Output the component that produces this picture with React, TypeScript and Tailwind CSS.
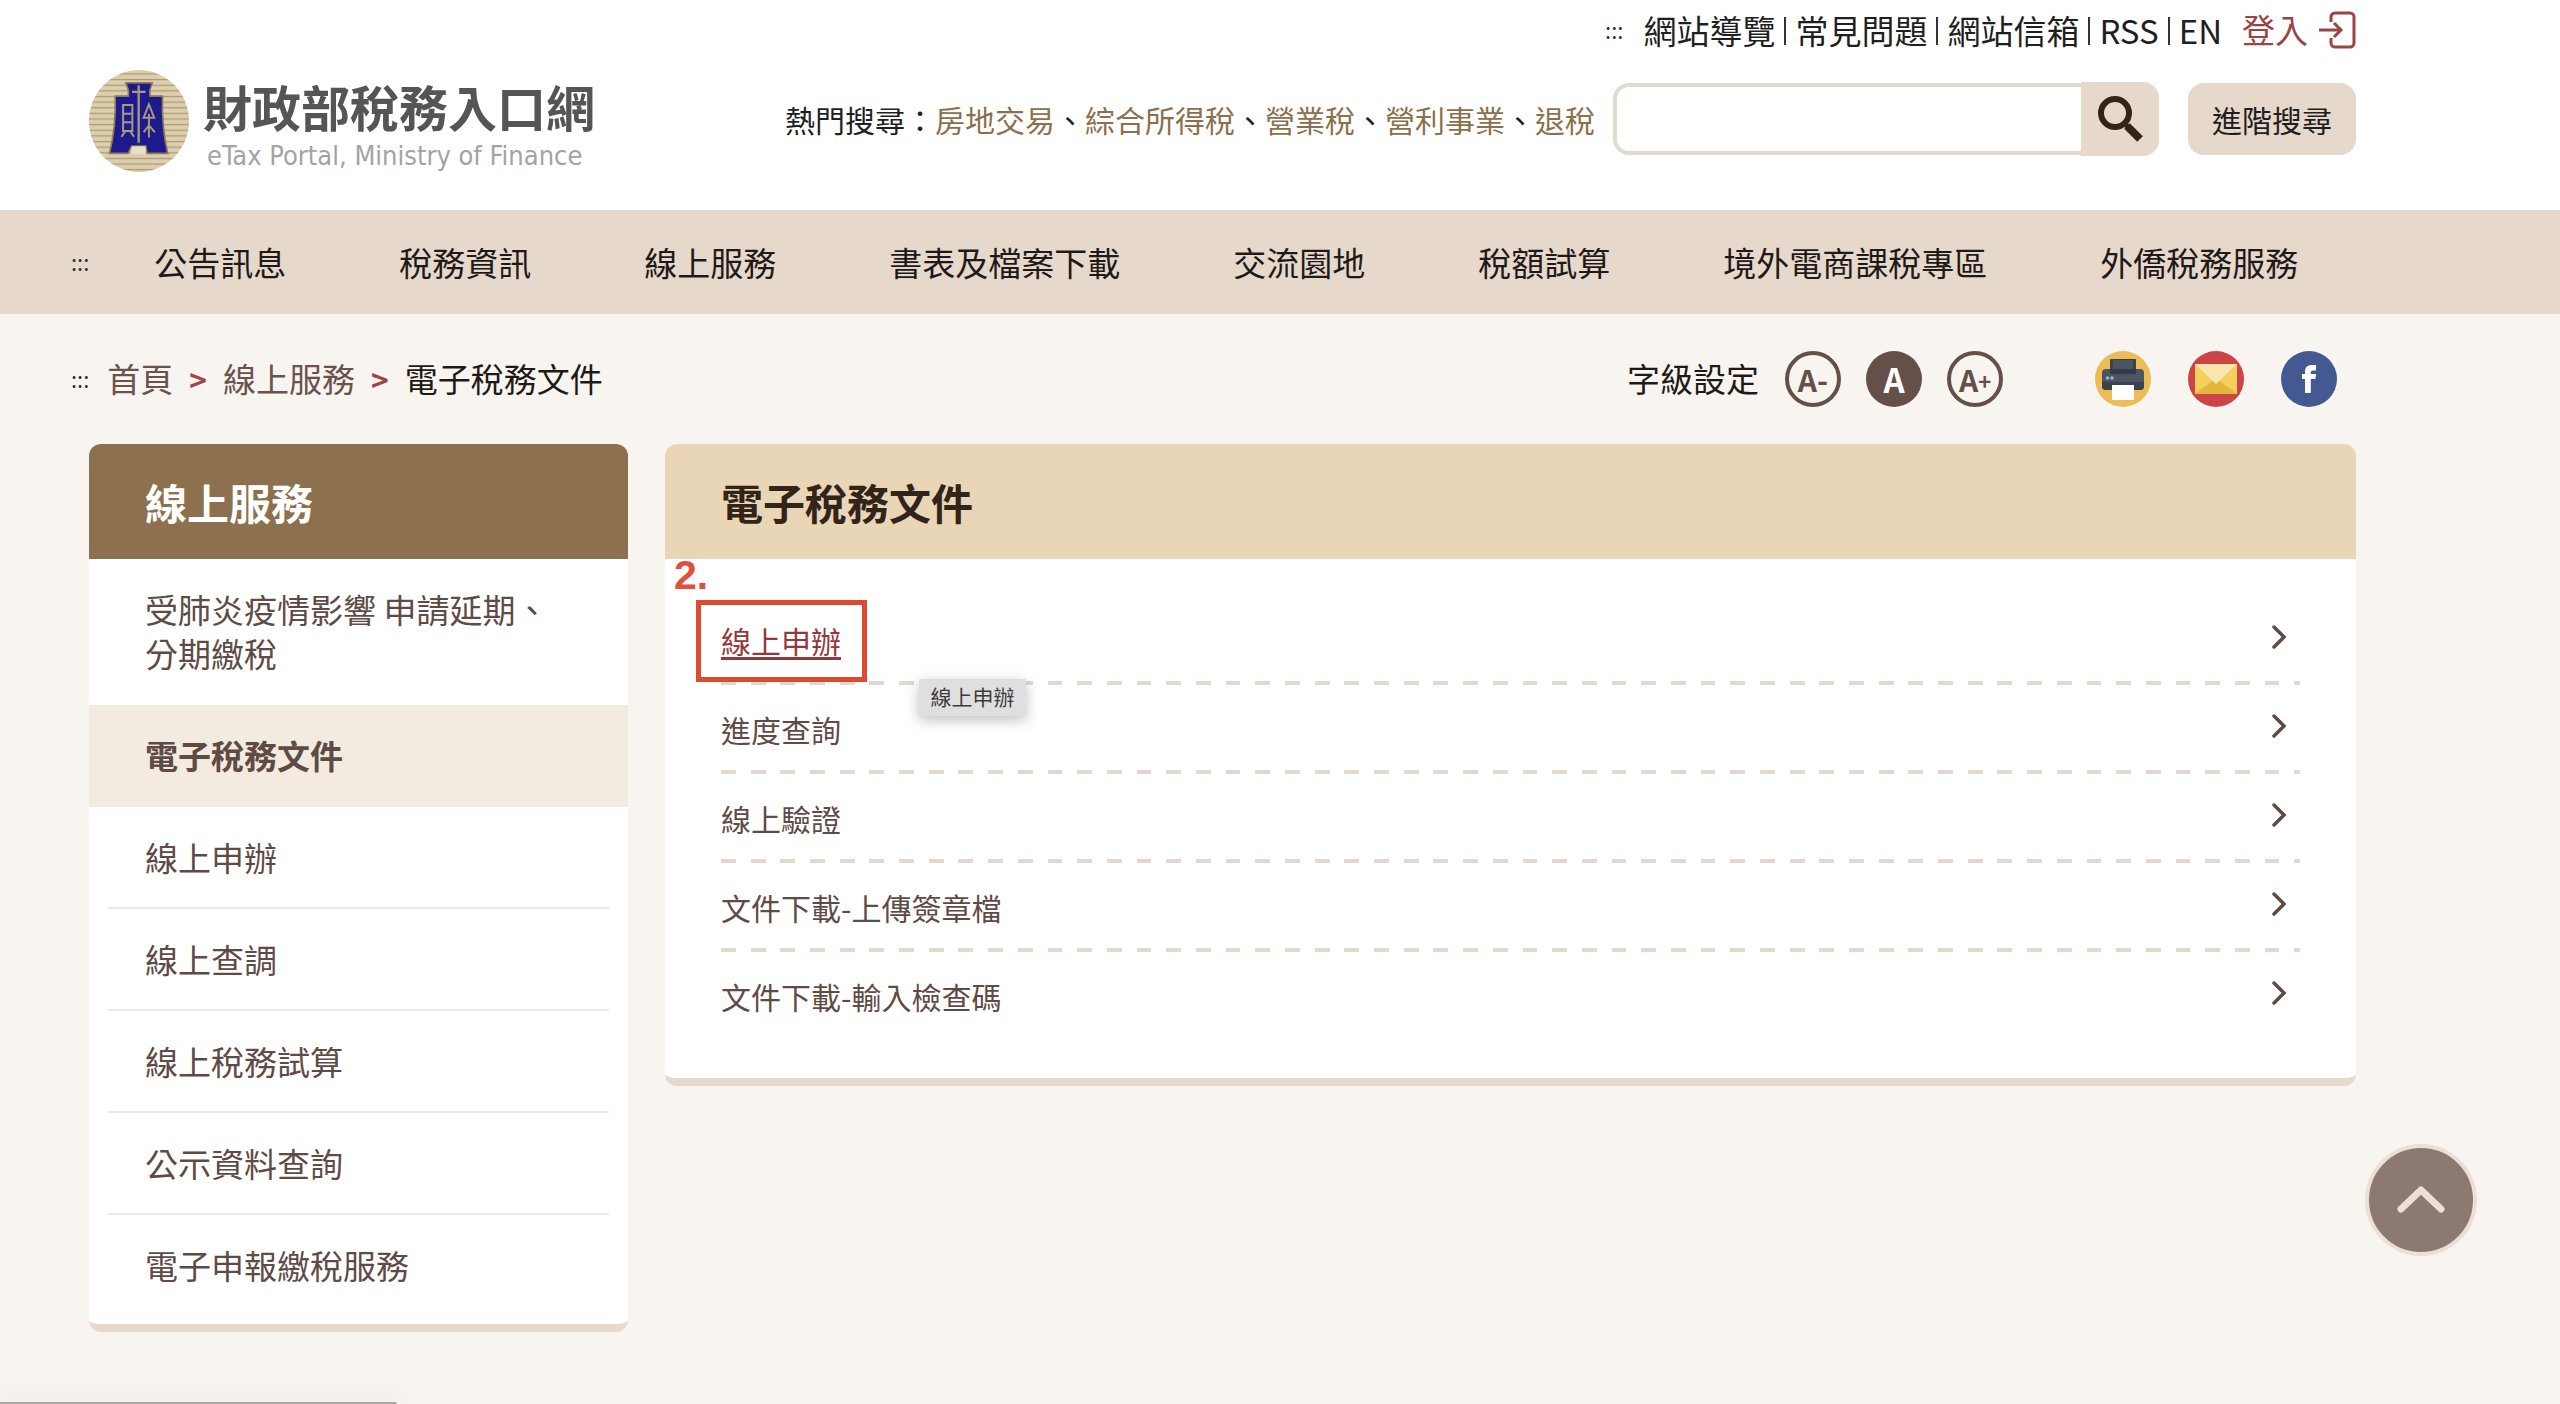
import { Fragment } from "react";
import clsx from "clsx";

const topLinks = ["網站導覽", "常見問題", "網站信箱", "RSS", "EN"];

const hotKeywords = ["房地交易", "綜合所得稅", "營業稅", "營利事業", "退稅"];

const mainMenu = [
  "公告訊息",
  "稅務資訊",
  "線上服務",
  "書表及檔案下載",
  "交流園地",
  "稅額試算",
  "境外電商課稅專區",
  "外僑稅務服務",
];

const sideMenu = [
  { label: "受肺炎疫情影響 申請延期、分期繳稅" },
  { label: "電子稅務文件", active: true },
  { label: "線上申辦" },
  { label: "線上查調" },
  { label: "線上稅務試算" },
  { label: "公示資料查詢" },
  { label: "電子申報繳稅服務" },
];

const documentLinks = [
  "線上申辦",
  "進度查詢",
  "線上驗證",
  "文件下載-上傳簽章檔",
  "文件下載-輸入檢查碼",
];

/* Access key marker */
function Marker() {
  return (
    <a href="#" className="pb-[2px] text-[22px] leading-none text-[#333]">
      :::
    </a>
  );
}

function LogoMark() {
  return (
    <svg viewBox="14 18 302 308" className="w-[100px] h-[102px] shrink-0">
      <defs>
        <pattern id="stripes" width="20" height="17" patternUnits="userSpaceOnUse">
          <rect width="20" height="17" fill="#dccfb0" />
          <rect y="11" width="20" height="4" fill="#b09c70" />
        </pattern>
      </defs>
      <ellipse cx="165" cy="172" rx="151" ry="154" fill="url(#stripes)" />
      <path
        d="M125 57H205L198 78V97H236Q233 190 252 270H190L185 248H143L132 270H76Q96 190 93 97H133V78Z"
        fill="#1c1a8c"
        stroke="#8f7a55"
        strokeWidth="5"
      />
      <path d="M143 248H185V272H140Z" fill="#e9e0c6" />
      <g fill="none" stroke="#a8987f" strokeWidth="6">
        <path d="M144 84H185M164 64V238" strokeWidth="7" />
        <path d="M117 124H145V202H117ZM117 150H145M117 176H145M124 202L112 220M138 202L150 220" />
        <path d="M195 122L179 162H211ZM195 150V222M195 185L179 206M195 185L213 206" />
      </g>
    </svg>
  );
}

function LoginIcon() {
  return (
    <svg viewBox="0 0 38 38" fill="none" stroke="#9b4444" strokeWidth="3" className="w-[38px] h-[38px]">
      <path d="M13 11V6a4 4 0 0 1 4-4h15a4 4 0 0 1 4 4v26a4 4 0 0 1-4 4H17a4 4 0 0 1-4-4v-5" />
      <path d="M1 19H22M16 12L23 19L16 26" />
    </svg>
  );
}

function SearchIcon() {
  return (
    <svg viewBox="0 0 46 46" fill="none" stroke="#33231a" className="w-[46px] h-[46px]">
      <circle cx="18" cy="17" r="14" strokeWidth="6" />
      <path d="M27 27L31 31" strokeWidth="5" />
      <path d="M30 30L43 43" strokeWidth="8" />
    </svg>
  );
}

function PrinterIcon() {
  return (
    <svg viewBox="0 0 56 56" className="size-14">
      <circle cx="28" cy="28" r="28" fill="#ecbc57" />
      <rect x="15" y="8" width="26" height="16" rx="1" fill="#3b424e" />
      <rect x="18" y="9" width="20" height="9" fill="#4d5461" />
      <rect x="7" y="18" width="42" height="21" rx="4" fill="#4d5461" />
      <path d="M15 18H41V23H15Z" fill="#343b46" />
      <path d="M7 31H49V35A4 4 0 0 1 45 39H11A4 4 0 0 1 7 35Z" fill="#3b424e" />
      <circle cx="12.5" cy="27" r="1.8" fill="#7cc4d8" />
      <circle cx="17" cy="27" r="1.8" fill="#7cc4d8" />
      <rect x="17" y="34" width="22" height="15" fill="#fff" />
    </svg>
  );
}

function MailIcon() {
  return (
    <svg viewBox="0 0 56 56" className="size-14">
      <circle cx="28" cy="28" r="28" fill="#cc4448" />
      <rect x="7" y="13" width="42" height="30" fill="#f3cf5c" />
      <path d="M7 43L28 27L49 43Z" fill="#e3b63c" />
      <path d="M7 13H49L28 33Z" fill="#fae5ac" />
    </svg>
  );
}

function FacebookIcon() {
  return (
    <svg viewBox="0 0 56 56" className="size-14">
      <circle cx="28" cy="28" r="28" fill="#445892" />
      <path
        d="M24 42V28H21V23H24V20.500C24 16.500 26.500 14 30.500 14H35V19.500H32C30.600 19.500 29.800 20.200 29.800 21.500V23H35L34.400 28H29.800V42Z"
        fill="#fff"
      />
    </svg>
  );
}

function Chevron() {
  return (
    <svg viewBox="0 0 14 24" fill="none" stroke="#5f4b45" strokeWidth="3.500" strokeLinecap="round" className="w-[14px] h-6">
      <path d="M2 2L12 12L2 22" />
    </svg>
  );
}

function Header() {
  return (
    <header className="h-[210px] pl-[89px] pr-[204px] flex justify-between bg-white">
      <a href="#" className="pt-[70px] flex items-start gap-[14px]">
        <LogoMark />
        <span className="flex flex-col">
          <span className="text-[49px] leading-[72px] font-bold text-[#555]">財政部稅務入口網</span>
          <span className="px-1 font-['DejaVu_Sans_Condensed','DejaVu_Sans',sans-serif] text-[27px] leading-7 text-[#a3a3a3]">
            eTax Portal, Ministry of Finance
          </span>
        </span>
      </a>

      <div className="flex flex-col items-end">
        <nav className="h-[60px] flex items-center text-[33px] text-[#1f1f1f]">
          <Marker />
          <ul className="ml-5 pt-[2px] flex items-center">
            {topLinks.map((label, i) => (
              <li key={label} className="flex items-center">
                {i > 0 && <span className="mx-[9px] w-[2px] h-7 bg-[#333]" />}
                <a href="#">{label}</a>
              </li>
            ))}
          </ul>
          <a href="#" className="ml-5 flex items-center gap-[10px] text-[#9b4444]">
            登入
            <LoginIcon />
          </a>
        </nav>

        <form className="mt-[22px] flex items-center">
          <p className="mr-[18px] text-[30px] text-[#1f1f1f]">
            熱門搜尋：
            {hotKeywords.map((word, i) => (
              <Fragment key={word}>
                {i > 0 && "、"}
                <a href="#" className="text-[#8b704c]">
                  {word}
                </a>
              </Fragment>
            ))}
          </p>
          <input
            type="search"
            aria-label="搜尋"
            className="w-[468px] h-[72px] px-5 text-[30px] bg-white border-4 border-r-0 border-[#e3dacf] rounded-l-2xl outline-none"
          />
          <button type="button" aria-label="搜尋" className="w-[78px] h-[74px] flex items-center justify-center bg-[#e6d8cb] rounded-r-2xl">
            <SearchIcon />
          </button>
          <button type="button" className="ml-[29px] w-[168px] h-[72px] text-[30px] text-[#1f1f1f] bg-[#e6d8cb] rounded-2xl">
            進階搜尋
          </button>
        </form>
      </div>
    </header>
  );
}

function MainNav() {
  return (
    <nav className="h-[104px] pl-[71px] flex items-center bg-[#e6d8cb]">
      <Marker />
      <ul className="ml-[65px] pt-[2px] flex gap-[113px] text-[33px] text-[#1f1a17]">
        {mainMenu.map((label) => (
          <li key={label}>
            <a href="#">{label}</a>
          </li>
        ))}
      </ul>
    </nav>
  );
}

function Breadcrumb() {
  return (
    <nav className="flex items-center text-[33px] text-[#6b524c]">
      <Marker />
      <ol className="ml-[18px] flex items-center">
        <li>
          <a href="#">首頁</a>
        </li>
        <li className="mx-4 text-[#a04444] font-bold text-[30px]">&gt;</li>
        <li>
          <a href="#">線上服務</a>
        </li>
        <li className="mx-4 text-[#a04444] font-bold text-[30px]">&gt;</li>
        <li className="text-[#1f1a17]">電子稅務文件</li>
      </ol>
    </nav>
  );
}

function PageTools() {
  return (
    <div className="flex items-center">
      <span className="text-[33px] text-[#1f1a17]">字級設定</span>
      <div className="ml-[26px] flex gap-[25px]">
        <button type="button" className="size-14 rounded-full border-4 border-[#644f49] text-[30px] font-bold leading-none text-[#644f49]">
          A-
        </button>
        <button type="button" className="size-14 rounded-full bg-[#644f49] text-[33px] font-bold leading-none text-white">
          A
        </button>
        <button type="button" className="size-14 rounded-full border-4 border-[#644f49] text-[30px] font-bold leading-none text-[#644f49]">
          A<span className="align-[2px] text-[22px] leading-none">+</span>
        </button>
      </div>
      <div className="ml-[92px] flex gap-[37px]">
        <a href="#" aria-label="列印">
          <PrinterIcon />
        </a>
        <a href="#" aria-label="電子郵件">
          <MailIcon />
        </a>
        <a href="#" aria-label="Facebook">
          <FacebookIcon />
        </a>
      </div>
    </div>
  );
}

function Sidebar() {
  return (
    <aside className="w-[539px] shrink-0 bg-white border-b-8 border-[#e5dacd] rounded-xl overflow-hidden">
      <h2 className="h-[115px] px-14 flex items-center bg-[#8d704d] text-[42px] font-bold text-white">線上服務</h2>
      <ul className="pb-[7px] text-[33px] leading-[44px] text-[#5f4b45]">
        {sideMenu.map(({ label, active }, i) => (
          <li key={label} className={clsx(active ? "bg-[#f3eae0] font-bold" : "px-[19px]")}>
            <a
              href="#"
              className={clsx(
                "block py-7 border-b-2",
                active ? "px-14 border-transparent" : "px-[37px]",
                !active && i > 0 && i < sideMenu.length - 1 ? "border-[#eeebe6]" : "border-transparent",
              )}
            >
              {label}
            </a>
          </li>
        ))}
      </ul>
    </aside>
  );
}

function DocumentPanel() {
  return (
    <main className="flex-1 bg-white border-b-8 border-[#e5dacd] rounded-xl">
      <h1 className="h-[115px] px-14 flex items-center bg-[#e8d6b6] rounded-t-xl text-[42px] font-bold text-[#33241a]">
        電子稅務文件
      </h1>
      <ul className="relative px-14 py-[37px] text-[30px] text-[#5f4b45]">
        {documentLinks.map((label, i) => (
          <li key={label}>
            <a href="#" className="h-[85px] pr-[14px] pb-1 flex items-center justify-between">
              <span className={clsx("pt-2", i === 0 && "text-[#93393b] underline underline-offset-4")}>{label}</span>
              <Chevron />
            </a>
            <div
              className={clsx(
                "h-1",
                i < documentLinks.length - 1 &&
                  "bg-[repeating-linear-gradient(to_right,#e1d8ce_0_0.94%,transparent_0.94%_1.88%)]",
              )}
            />
          </li>
        ))}

        {/* Step highlight */}
        <li className="absolute left-[9px] top-0 font-['Liberation_Sans',sans-serif] text-[41px] leading-8 font-bold text-[#e0503f]">
          2.
        </li>
        <li className="absolute left-[31px] top-[41px] w-[171px] h-[82px] border-[5px] border-[#dd4a2f] pointer-events-none" />
        <li
          role="tooltip"
          className="absolute left-[254px] top-[120px] w-[107px] h-[37px] pb-[2px] flex items-center justify-center bg-[#dfdfdf] text-[21px] text-[#3c3c3c] shadow-[0_4px_14px_rgba(0,0,0,0.25)]"
        >
          線上申辦
        </li>
      </ul>
    </main>
  );
}

export default function App() {
  return (
    <div className="min-h-screen bg-[#f8f5f0] font-['Noto_Sans_CJK_TC',sans-serif]">
      <Header />
      <MainNav />

      <div className="h-[130px] pl-[71px] pr-[223px] flex items-center justify-between">
        <Breadcrumb />
        <PageTools />
      </div>

      <div className="pl-[89px] pr-[204px] flex items-start gap-[37px]">
        <Sidebar />
        <DocumentPanel />
      </div>

      {/* Back to top */}
      <button
        type="button"
        aria-label="回到頁首"
        className="fixed right-[83px] bottom-[148px] size-28 flex items-center justify-center rounded-full border-4 border-[#ecdfd6] bg-[#8c7a72]"
      >
        <svg viewBox="0 0 50 30" fill="none" stroke="#ecdfd6" strokeWidth="7" strokeLinecap="round" strokeLinejoin="round" className="w-[50px] h-[30px]">
          <path d="M5 24L25 5L45 24" />
        </svg>
      </button>

      {/* Browser status bar edge */}
      <div className="fixed left-0 bottom-0 w-[397px] h-[2px] bg-[#a9a8a6] rounded-tr-sm shadow-[0_0_24px_rgba(0,0,0,0.35)]" />
    </div>
  );
}
